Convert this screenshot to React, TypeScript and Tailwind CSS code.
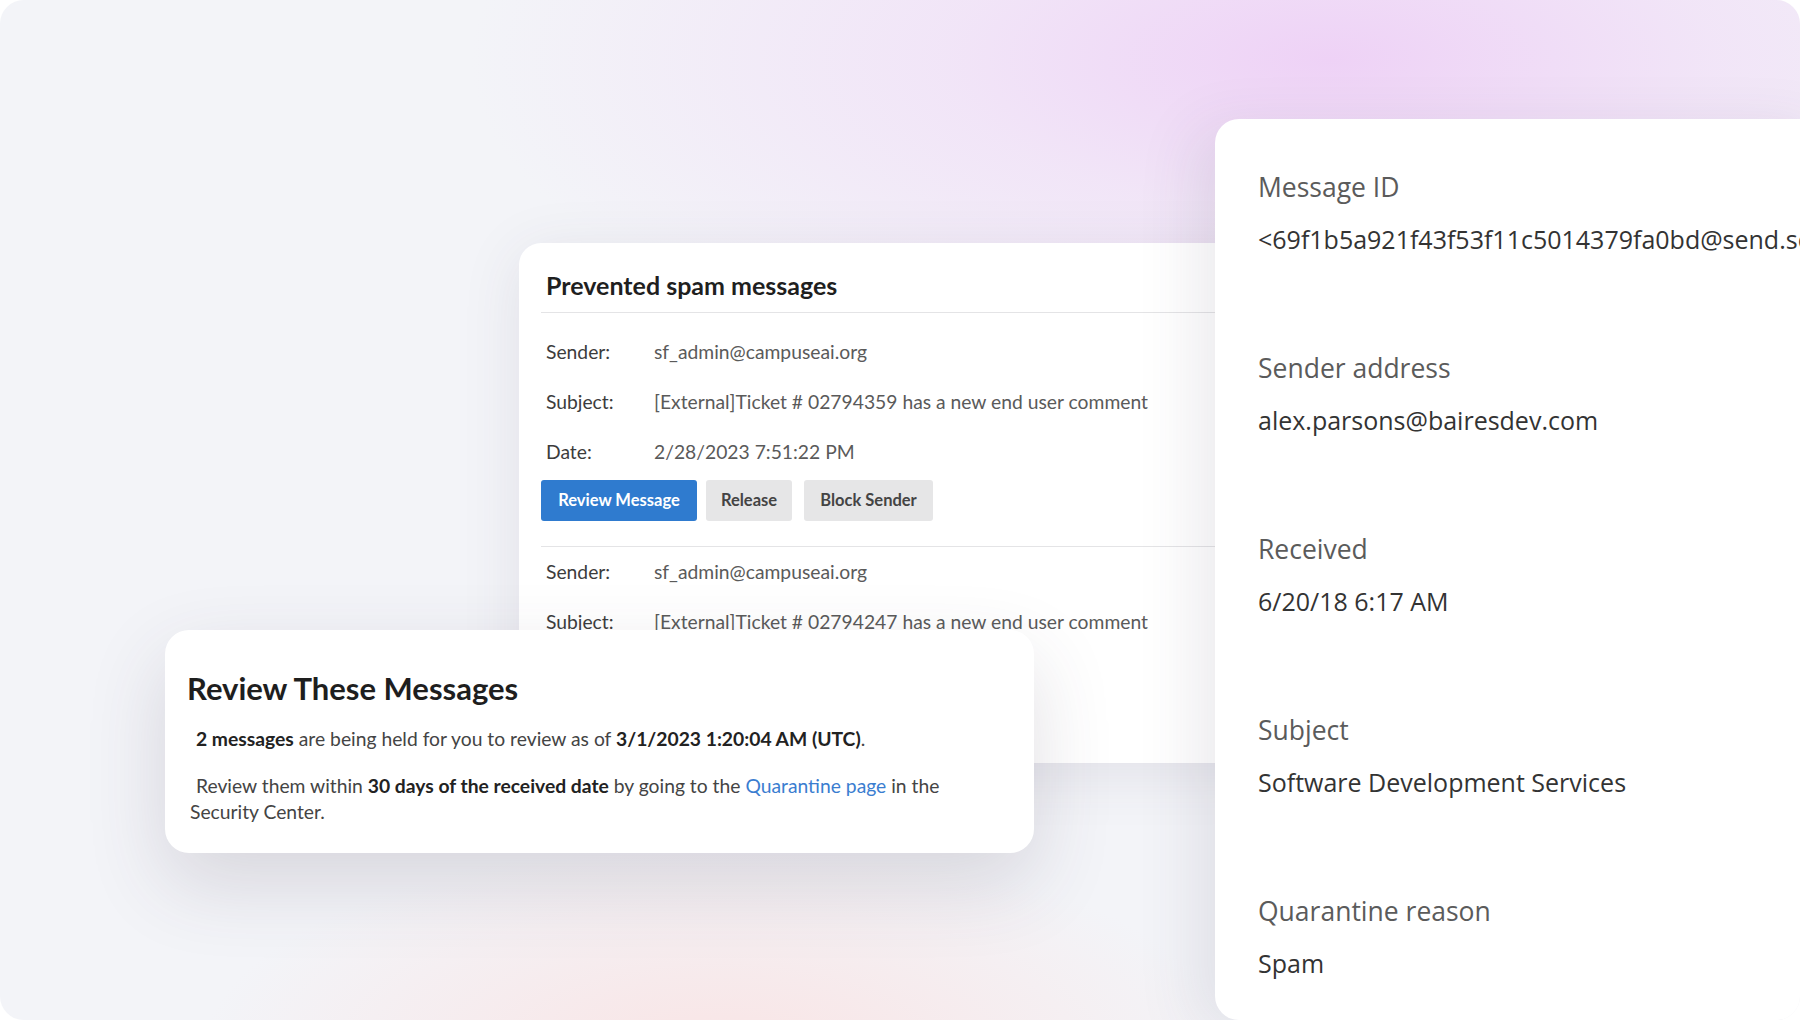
export default function App() {
  const rowsTop = [
    { label: "Sender:", value: "sf_admin@campuseai.org" },
    { label: "Subject:", value: "[External]Ticket # 02794359 has a new end user comment" },
    { label: "Date:", value: "2/28/2023 7:51:22 PM" },
  ];
  const rowsBottom = [
    { label: "Sender:", value: "sf_admin@campuseai.org" },
    { label: "Subject:", value: "[External]Ticket # 02794247 has a new end user comment" },
  ];
  const details = [
    { label: "Message ID", value: "<69f1b5a921f43f53f11c5014379fa0bd@send.sendgrid.net>" },
    { label: "Sender address", value: "alex.parsons@bairesdev.com" },
    { label: "Received", value: "6/20/18 6:17 AM" },
    { label: "Subject", value: "Software Development Services" },
    { label: "Quarantine reason", value: "Spam" },
  ];

  return (
    <div className="w-[1800px] h-[1020px] bg-white overflow-hidden">
      <div className="relative w-full h-full rounded-[24px] overflow-hidden bg-[#f3f4f8] bg-[radial-gradient(ellipse_860px_340px_at_1330px_60px,rgba(238,208,246,0.95),rgba(240,217,247,0.55)_45%,rgba(243,244,248,0)_100%),radial-gradient(ellipse_520px_220px_at_720px_1060px,rgba(250,226,226,0.9),rgba(243,244,248,0)_100%)]">
        {/* Prevented spam messages card */}
        <div className="absolute left-[519px] top-[243px] w-[760px] h-[520px] bg-white rounded-tl-[22px] shadow-[0_10px_60px_rgba(70,60,90,0.10)] pl-[22px] pt-[24px] font-['Lato',sans-serif]">
          <h2 className="pl-[5px] text-[25px] leading-[36px] font-bold text-[#1f1f1f]">
            Prevented spam messages
          </h2>
          <div className="mt-[9px] border-t border-[#e4e4e6]" />
          <div className="pt-[14px]">
            {rowsTop.map((r) => (
              <div key={r.label} className="flex h-[50px] items-center pl-[5px] text-[19.3px] whitespace-nowrap">
                <span className="w-[108px] text-[#3c3c3c]">{r.label}</span>
                <span className="text-[#5a5a5a]">{r.value}</span>
              </div>
            ))}
          </div>
          <div className="mt-[3px] flex">
            <div className="flex h-[41px] w-[156px] items-center justify-center rounded-[3px] bg-[#2f7bcf] text-[16.5px] font-bold text-white">
              Review Message
            </div>
            <div className="ml-[9px] flex h-[41px] w-[86px] items-center justify-center rounded-[3px] bg-[#e6e6e7] text-[16.5px] font-bold text-[#444]">
              Release
            </div>
            <div className="ml-[12px] flex h-[41px] w-[129px] items-center justify-center rounded-[3px] bg-[#e6e6e7] text-[16.5px] font-bold text-[#444]">
              Block Sender
            </div>
          </div>
          <div className="mt-[25px] border-t border-[#e4e4e6]">
            {rowsBottom.map((r) => (
              <div key={r.label} className="flex h-[50px] items-center pl-[5px] text-[19.3px] whitespace-nowrap">
                <span className="w-[108px] text-[#3c3c3c]">{r.label}</span>
                <span className="text-[#5a5a5a]">{r.value}</span>
              </div>
            ))}
          </div>
        </div>

        {/* Review These Messages card */}
        <div className="absolute left-[165px] top-[630px] w-[869px] h-[223px] rounded-[24px] bg-white shadow-[0_30px_80px_rgba(70,55,80,0.16)] pl-[22px] pt-[40px] font-['Lato',sans-serif]">
          <h1 className="text-[31px] leading-[36px] font-bold text-[#1e1e1e]">Review These Messages</h1>
          <p className="mt-[20px] pl-[3px] indent-[6px] text-[19.3px] leading-[26px] text-[#444]">
            <b className="text-[#222]">2 messages</b> are being held for you to review as of{" "}
            <b className="text-[#222]">3/1/2023 1:20:04 AM (UTC)</b>.
          </p>
          <p className="mt-[21px] pl-[3px] indent-[6px] text-[19.3px] leading-[26px] text-[#444]">
            Review them within <b className="text-[#222]">30 days of the received date</b> by going to the{" "}
            <span className="text-[#3a7dd0]">Quarantine page</span> in the
            <br />
            Security Center.
          </p>
        </div>

        {/* Details panel */}
        <div className="absolute left-[1215px] top-[119px] bottom-0 w-[620px] rounded-l-[24px] bg-white shadow-[-20px_10px_60px_rgba(70,60,90,0.10)] pl-[43px] pt-[51px] font-['Open_Sans',sans-serif] overflow-hidden">
          {details.map((d, i) => (
            <div key={d.label} className={i === 0 ? "" : "mt-[95px]"}>
              <div className="text-[26.5px] leading-[34px] text-[#5b5b5b] whitespace-nowrap">{d.label}</div>
              <div className="mt-[18px] text-[25px] leading-[34px] text-[#333] whitespace-nowrap">{d.value}</div>
            </div>
          ))}
        </div>
      </div>
    </div>
  );
}
